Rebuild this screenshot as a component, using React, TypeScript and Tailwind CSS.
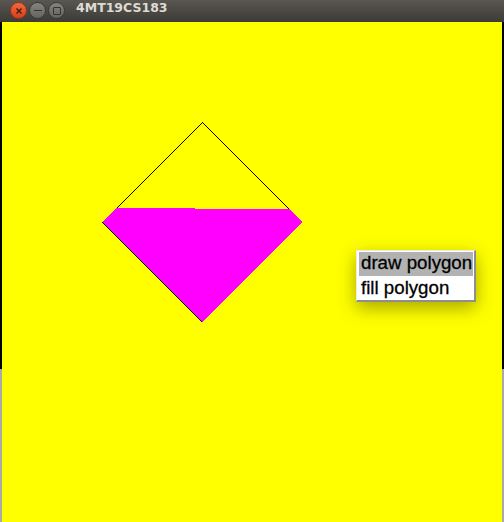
import { useState } from "react";

const Polygon = () => {
  // canvas coords, origin at the canvas' top-left corner
  return (
    <svg
      className="absolute left-0 top-0"
      width={500}
      height={500}
      shapeRendering="crispEdges"
    >
      <polygon
        points="114,186 193,186 193,187 287,187 300,200 200,300 100,200"
        fill="#ff00ff"
      />
      <line x1={200.5} y1={100.5} x2={114.5} y2={186.5} stroke="#000" strokeWidth={1} />
      <line x1={200.5} y1={100.5} x2={287.5} y2={187.5} stroke="#000" strokeWidth={1} />
      <line x1={100.5} y1={200.5} x2={200.5} y2={300.5} stroke="#000" strokeWidth={1} />
    </svg>
  );
};

const PopupMenu = () => {
  const [active] = useState(0);
  const items = ["draw polygon", "fill polygon"];
  return (
    <div className="absolute left-[354px] top-[228px] w-[120px] h-[52px] bg-white border-t border-l border-t-[#ececec] border-l-[#ececec] border-r-2 border-b-2 border-r-[#8e8e8e] border-b-[#8e8e8e] pt-[1px] pl-[2px] pr-[1px] shadow-[0_6px_18px_rgba(0,0,0,0.35)] font-['Liberation_Sans',Arial,sans-serif] text-[18.7px] text-black [-webkit-text-stroke:0.3px_black]">
      {items.map((item, i) => (
        <div
          key={item}
          className={
            i === active
              ? "h-[24px] leading-[21px] pl-[2px] bg-[#b2b2b2] whitespace-nowrap"
              : "h-[24px] leading-[21px] pt-[1px] pl-[2px] whitespace-nowrap"
          }
        >
          {item}
        </div>
      ))}
    </div>
  );
};

const TitleBar = () => {
  return (
    <div className="h-[22px] flex items-start pl-[10px] bg-gradient-to-b from-[#5a5751] to-[#3c3b37]">
      <div className="mt-[2px] flex gap-[2px]">
        <div className="w-[17px] h-[17px] rounded-full bg-gradient-to-b from-[#f0683d] to-[#d4401c] border border-[#9e3315] flex items-center justify-center">
          <svg width="8" height="8" viewBox="0 0 8 8">
            <path d="M1.5 1.5 L6.5 6.5 M6.5 1.5 L1.5 6.5" stroke="#3a1a10" strokeWidth="1.3" />
          </svg>
        </div>
        <div className="w-[17px] h-[17px] rounded-full bg-gradient-to-b from-[#86847e] to-[#65635e] border border-[#3a3935] flex items-center justify-center">
          <div className="w-[8px] h-[1.5px] bg-[#35342f]" />
        </div>
        <div className="w-[17px] h-[17px] rounded-full bg-gradient-to-b from-[#86847e] to-[#65635e] border border-[#3a3935] flex items-center justify-center">
          <div className="w-[8px] h-[8px] border-[1.3px] border-[#35342f] rounded-[1px]" />
        </div>
      </div>
      <span className="ml-[11px] mt-[2px] leading-none font-['DejaVu_Sans',sans-serif] font-bold text-[12.5px] text-[#dfdbd2]">
        4MT19CS183
      </span>
    </div>
  );
};

const Edge = () => (
  <div className="w-[2px] flex flex-col">
    <div className="h-[347px] bg-black" />
    <div className="flex-1 bg-[#a9a9a9]" />
  </div>
);

const App = () => {
  return (
    <div className="w-[504px] h-[522px] flex flex-col overflow-hidden bg-black">
      <TitleBar />
      <div className="flex-1 flex flex-row">
        <Edge />
        <div className="relative flex-1 bg-[#ffff00]">
          <Polygon />
          <PopupMenu />
        </div>
        <Edge />
      </div>
    </div>
  );
};

export default App;
